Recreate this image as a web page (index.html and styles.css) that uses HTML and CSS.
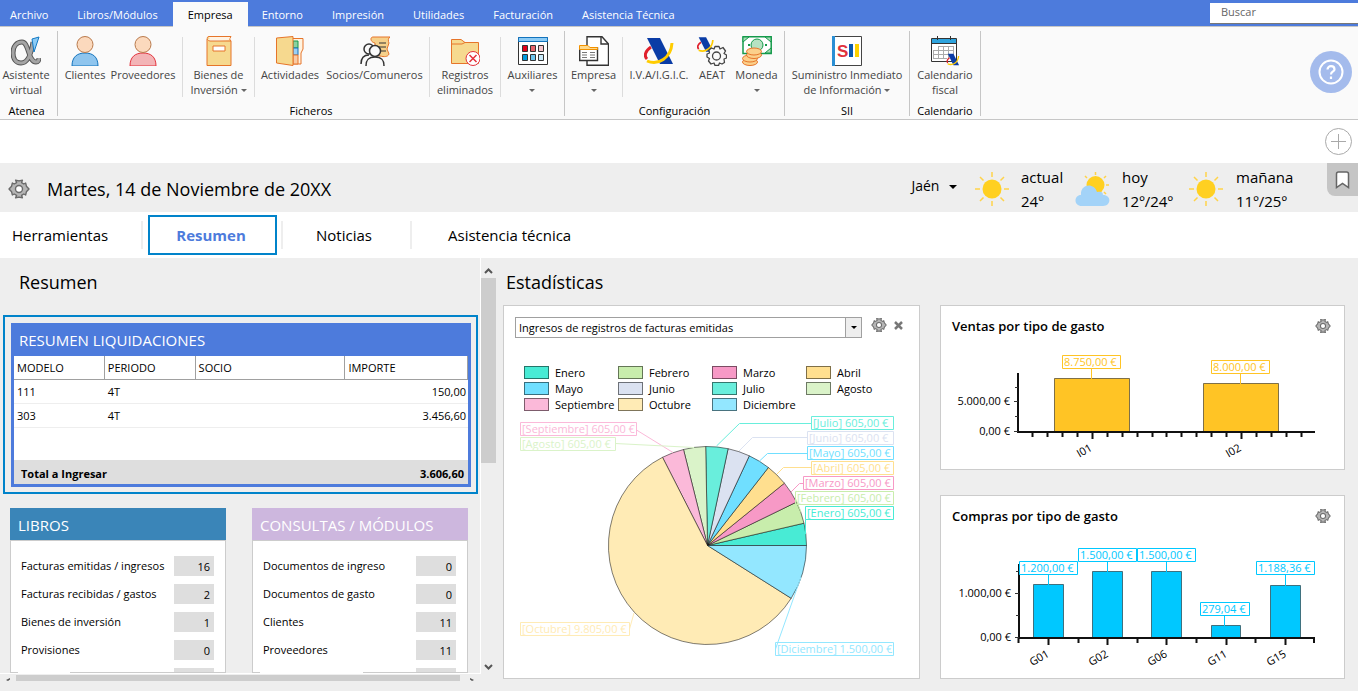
FILE: index.html
```html
<!DOCTYPE html>
<html lang="es">
<head>
<meta charset="utf-8">
<title>Resumen</title>
<link rel="stylesheet" href="styles.css">
</head>
<body>
<svg class="defs" aria-hidden="true">
  <symbol id="gear" viewBox="0 0 22 22">
    <path d="M8.6 4.6 7.6 2.2 11 2.9 14.4 2.2 13.6 4.6 15.8 6 17.6 5 18.4 8.2 21 11 18.4 13.8 17.6 17 15.8 16 13.6 17.4 14.4 19.8 11 19.1 7.600 19.8 8.600 17.4 6.200 16 4.400 17 3.600 13.800 1 11 3.600 8.200 4.400 5 6.200 6Z" fill="#b5b5b5" stroke="#6a6a6a" stroke-width="1.400" stroke-linejoin="round"/>
    <circle cx="11" cy="11" r="3.500" fill="#fff" stroke="#6a6a6a" stroke-width="1.400"/>
  </symbol>
  <symbol id="sun" viewBox="0 0 34 34">
    <circle cx="17" cy="17" r="9.500" fill="#ffd021"/>
    <path d="M17 0V5M17 29V34M0 17H5M29 17H34M5 5 8.500 8.500M25.500 25.500 29 29M29 5 25.500 8.500M8.500 25.500 5 29" stroke="#ffd34a" stroke-width="1.500"/>
  </symbol>
  <symbol id="aeat" viewBox="0 0 30 30">
    <path d="M3 2H16L29 28H16Z" fill="#0a3ca6"/>
    <path d="M7 11C1 15 0 20 3 23" fill="none" stroke="#e0202c" stroke-width="3"/>
    <path d="M3 25C14 30 27 22 28 7" fill="none" stroke="#fc0" stroke-width="3"/>
  </symbol>
</svg>

<header class="topbar">
  <nav class="menu">
    <button class="menu-file">Archivo</button>
    <button>Libros/Módulos</button>
    <button class="menu-active">Empresa</button>
    <button>Entorno</button>
    <button>Impresión</button>
    <button>Utilidades</button>
    <button>Facturación</button>
    <button>Asistencia Técnica</button>
  </nav>
  <input class="search" type="search" placeholder="Buscar" aria-label="Buscar">
</header>

<section class="ribbon">
  <div class="group g-atenea">
    <div class="tools">
      <button class="tool">
        <svg width="30" height="30" viewBox="0 0 30 30"><path d="M22 6C20 20 16 27 10 27C5 27 2 23 2 17C2 10 6 6 11 6C18 6 17 26 25 26C27 26 28 24 28 22" fill="none" stroke="#555" stroke-width="5"/><path d="M22 6C20 20 16 27 10 27C5 27 2 23 2 17C2 10 6 6 11 6C18 6 17 26 25 26C27 26 28 24 28 22" fill="none" stroke="#a5a5a5" stroke-width="3"/><path d="M21 3 28 1 23 16Z" fill="#8ccbf5" stroke="#1379c4"/></svg>
        <span>Asistente<br>virtual</span></button>
    </div>
    <h2>Atenea</h2>
  </div>
  <div class="group g-ficheros">
    <div class="tools">
      <button class="tool">
        <svg width="30" height="30" viewBox="0 0 30 30"><path d="M2 30C2 21 7 17 15 17S28 21 28 30Z" fill="#8fc5ee" stroke="#1273bd"/><circle cx="15" cy="8.500" r="8" fill="#fbd9bd" stroke="#b97a4c"/></svg>
        <span>Clientes</span></button>
      <button class="tool ruled">
        <svg width="30" height="30" viewBox="0 0 30 30"><path d="M2 30C2 21 7 17 15 17S28 21 28 30Z" fill="#f3b4b6" stroke="#e3323c"/><circle cx="15" cy="8.500" r="8" fill="#fbd9bd" stroke="#b97a4c"/></svg>
        <span>Proveedores</span></button>
      <button class="tool ruled">
        <svg width="30" height="30" viewBox="0 0 30 30"><path d="M3 3V29.500H27V5H6C3 5 2 .5 5 .5H27L25.500 3 27 5" fill="#f6d98f" stroke="#e6752a"/><path d="M5 1H26L25 4H6Z" fill="#fff3e3"/><path d="M9 10H21V15H9Z" fill="#fff" stroke="#e6752a"/></svg>
        <span>Bienes de<br>Inversión <i class="caret"></i></span></button>
      <button class="tool">
        <svg width="30" height="30" viewBox="0 0 30 30"><path d="M12 2.500H28V13L26 17V28H12Z" fill="#fff3e0" stroke="#e6752a"/><path d="M18 5H23V12H18Z" fill="#8ad1a0" stroke="#159a4b"/><path d="M18 12H23V19H18Z" fill="#9ad0f5" stroke="#1273bd"/><path d="M18 19H23V28H18Z" fill="#f9cba4" stroke="#e6752a"/><path d="M1.500 2 18 .5V29.500L1.500 27Z" fill="#f6d98f" stroke="#e6752a"/></svg>
        <span>Actividades</span></button>
      <button class="tool ruled wide">
        <svg width="30" height="30" viewBox="0 0 30 30"><path d="M13 1H30C28 2 28 5 29 7L27 13 29 18C28 21 24 21 20 20L15 19V7C10 6 10 1 13 1Z" fill="#f6d08a" stroke="#e6752a"/><path d="M19 7H26M18 11H26M20 15H26" stroke="#333"/><circle cx="9" cy="13" r="5" fill="#fafafa" stroke="#333" stroke-width="1.500"/><path d="M1 28C1 22 4 19 9 19" fill="none" stroke="#333" stroke-width="1.500"/><path d="M6 30C6 23 9 21 15 21S24 23 24 30" fill="#fafafa" stroke="#333" stroke-width="1.500"/><circle cx="15" cy="15" r="5.500" fill="#fafafa" stroke="#333" stroke-width="1.500"/></svg>
        <span>Socios/Comuneros</span></button>
      <button class="tool ruled">
        <svg width="30" height="30" viewBox="0 0 30 30"><path d="M1.500 27.500V3.500H11L15 6.500H28.500V27.500Z" fill="#f6d98f" stroke="#e6752a"/><path d="M2 8H12L15 6.500" fill="none" stroke="#e6752a"/><circle cx="23" cy="22.500" r="7" fill="#fff" stroke="#e3323c"/><path d="M19.500 19 26.500 26M26.500 19 19.500 26" stroke="#e3323c" stroke-width="1.500"/></svg>
        <span>Registros<br>eliminados</span></button>
      <button class="tool">
        <svg width="30" height="30" viewBox="0 0 30 30"><path d="M.5 1.500H29.500V28.500H.5Z" fill="#fff" stroke="#333"/><path d="M.5 1.500H29.500V5.500H.5Z" fill="#8ccbf5" stroke="#1273bd"/><g stroke="#333"><path d="M4.500 9.500H9.500V15.500H4.500Z" fill="#e2001a"/><path d="M12.500 9.500H17.500V15.500H12.500Z" fill="#e8636b"/><path d="M20.500 9.500H25.500V15.500H20.500Z" fill="#f7c4cb"/><path d="M4.500 18.500H9.500V24.500H4.500Z" fill="#0099dd"/><path d="M12.500 18.500H17.500V24.500H12.500Z" fill="#6cc5ee"/><path d="M20.500 18.500H25.500V24.500H20.500Z" fill="#c9eafa"/></g></svg>
        <span>Auxiliares<br><i class="caret"></i></span></button>
    </div>
    <h2>Ficheros</h2>
  </div>
  <div class="group g-config">
    <div class="tools">
      <button class="tool ruled">
        <svg width="30" height="30" viewBox="0 0 30 30"><path d="M8 .7H23L29.500 8V29.300H8Z" fill="#fff" stroke="#333" stroke-width="1.400"/><path d="M22 1V8H29" fill="none" stroke="#333" stroke-width="1.400"/><path d="M.7 12V24.500H18.500V12Z" fill="#fff" stroke="#333" stroke-width="1.400"/><path d="M.5 13.500V9.500H9L11 11.500H18.500V13.500Z" fill="#ffd98a" stroke="#f39200"/><path d="M3 16.500H8M3 19H8M3 21.500H8M11 16.500H16M11 19H16M11 21.500H16" stroke="#777"/></svg>
        <span>Empresa<br><i class="caret"></i></span></button>
      <button class="tool"><svg width="30" height="30"><use href="#aeat"/></svg><span>I.V.A/I.G.I.C.</span></button>
      <button class="tool">
        <svg width="30" height="30" viewBox="0 0 30 30"><use href="#aeat" width="17" height="17"/><path d="M17 13 18 10.500H22L23 13 26 11.500 28.500 15 27 17.500 29.500 19V22L27 23 27.500 26.500 25 28 22.500 27 21.500 29.500H18L17 27 14 28 11.500 25 12.500 22.500 10 21V18L12.500 17 12 14 14.500 12Z" fill="#fafafa" stroke="#444" stroke-width="1.300" stroke-linejoin="round"/><circle cx="19.500" cy="20" r="4" fill="#fafafa" stroke="#444" stroke-width="1.300"/></svg>
        <span>AEAT</span></button>
      <button class="tool">
        <svg width="30" height="30" viewBox="0 0 30 30"><path d="M1 .8H29.200V17.500H1Z" fill="#fff" stroke="#159a4b" stroke-width="1.500"/><path d="M1 1H7L1 6ZM29 1H23L29 6ZM29 17H23L29 12Z" fill="#a9dcb8" stroke="#159a4b"/><circle cx="15" cy="9" r="6" fill="#b6e2c2" stroke="#159a4b"/><path d="M6 9h2M23 9h2" stroke="#159a4b" stroke-width="2"/><g fill="#fbd08b" stroke="#e6752a"><ellipse cx="8" cy="26" rx="7.500" ry="3.500"/><ellipse cx="8" cy="22.500" rx="7.500" ry="3.500"/><ellipse cx="12" cy="19" rx="7.500" ry="3.500"/><ellipse cx="12" cy="15.500" rx="7.500" ry="3.500"/></g></svg>
        <span>Moneda<br><i class="caret"></i></span></button>
    </div>
    <h2>Configuración</h2>
  </div>
  <div class="group g-sii">
    <div class="tools">
      <button class="tool">
        <svg width="30" height="30" viewBox="0 0 30 30"><path d="M.5 .5H29.500V29.500H.5Z" fill="#fff" stroke="#444"/><path d="M0 0H3V30H0Z" fill="#2a8fd4"/><text x="5" y="21" class="sii-letter">S</text><path d="M17 8H21V21H17Z" fill="#0a5ab0"/><path d="M23 8H27V21H23Z" fill="#fed100"/></svg>
        <span>Suministro Inmediato<br>de Información <i class="caret"></i></span></button>
    </div>
    <h2>SII</h2>
  </div>
  <div class="group g-calendario">
    <div class="tools">
      <button class="tool">
        <svg width="30" height="30" viewBox="0 0 30 30"><path d="M1.500 2.500H26.500V25.500H1.500Z" fill="#fff" stroke="#333"/><path d="M2 3H26V7H2Z" fill="#2ea3dd"/><path d="M1.500 7.500H26.500M7.500 0V4M20.500 0V4" stroke="#333"/><path d="M8.500 10.500H23.500M3.500 14.500H23.500M3.500 18.500H23.500M3.500 22.500H17M3.500 14V23M8.500 10V23M13.500 10V23M18.500 10V23M23.500 10V20" stroke="#aaa" fill="none"/><use href="#aeat" x="16" y="17" width="14" height="13"/></svg>
        <span>Calendario<br>fiscal</span></button>
    </div>
    <h2>Calendario</h2>
  </div>
  <button class="help" aria-label="Ayuda"><svg width="26" height="26" viewBox="0 0 26 26" fill="none" stroke="#fff" stroke-width="2"><circle cx="13" cy="13" r="11.500"/><path d="M9.500 10.500C9.500 6 16.500 6 16.500 10.500C16.500 12.500 13 12.500 13 15.500M13 17.500V20" stroke-width="2.200"/></svg></button>
</section>

<div class="addbar"><button class="add" aria-label="Añadir"><svg width="27" height="27" viewBox="0 0 27 27" fill="none" stroke="#a9a9a9"><circle cx="13.500" cy="13.500" r="13"/><path d="M13.500 6V21M6 13.500H21"/></svg></button></div>

<section class="datebar">
  <svg width="22" height="22"><use href="#gear"/></svg>
  <h1>Martes, 14 de Noviembre de 20XX</h1>
  <button class="city">Jaén <i class="caret dark"></i></button>
  <svg width="34" height="34"><use href="#sun"/></svg>
  <p class="w-actual">actual<br>24º</p>
  <svg width="35" height="34" viewBox="0 0 35 34"><circle cx="20.500" cy="13" r="9" fill="#ffd021"/><path d="M20.500 0V3M10 4 12 6M31 4 29 6M31 13H34M29 20 31 22" stroke="#ffd34a" stroke-width="1.500"/><path d="M7 34C-2 34-1 23 6 23C5 12 19 10 22 20C27 19 28 21 28 23C37 23 36 34 28 34Z" fill="#a3d3f8"/></svg>
  <p class="w-hoy">hoy<br>12º/24º</p>
  <svg width="34" height="34"><use href="#sun"/></svg>
  <p class="w-manana">mañana<br>11º/25º</p>
  <button class="bookmark" aria-label="Marcador"><svg width="15" height="18" viewBox="0 0 15 18"><path d="M1.500 16.500V3Q1.500 1 3.500 1H11.500Q13.500 1 13.500 3V16.500L7.500 12.500Z" fill="#fff" stroke="#666" stroke-width="1.500"/></svg></button>
</section>

<nav class="tabs">
  <button class="t-herramientas">Herramientas</button>
  <button class="t-active">Resumen</button>
  <button class="t-noticias">Noticias</button>
  <button class="t-asistencia">Asistencia técnica</button>
</nav>

<main class="content">
  <section class="summary">
    <div class="pane">
      <h2 class="heading">Resumen</h2>
      <div class="highlight">
        <div class="settlement">
          <h3>RESUMEN LIQUIDACIONES</h3>
          <table>
            <thead><tr><th class="c-modelo">MODELO</th><th class="c-periodo">PERIODO</th><th class="c-socio">SOCIO</th><th>IMPORTE</th></tr></thead>
            <tbody>
              <tr><td>111</td><td>4T</td><td></td><td class="num">150,00</td></tr>
              <tr><td>303</td><td>4T</td><td></td><td class="num">3.456,60</td></tr>
            </tbody>
          </table>
          <div class="total"><span>Total a Ingresar</span><span>3.606,60</span></div>
        </div>
      </div>
      <div class="boxes">
        <article class="box libros">
          <h3>LIBROS</h3>
          <dl>
            <div><dt>Facturas emitidas / ingresos</dt><dd>16</dd></div>
            <div><dt>Facturas recibidas / gastos</dt><dd>2</dd></div>
            <div><dt>Bienes de inversión</dt><dd>1</dd></div>
            <div><dt>Provisiones</dt><dd>0</dd></div>
            <div><dt></dt><dd></dd></div>
          </dl>
        </article>
        <article class="box consultas">
          <h3>CONSULTAS / MÓDULOS</h3>
          <dl>
            <div><dt>Documentos de ingreso</dt><dd>0</dd></div>
            <div><dt>Documentos de gasto</dt><dd>0</dd></div>
            <div><dt>Clientes</dt><dd>11</dd></div>
            <div><dt>Proveedores</dt><dd>11</dd></div>
            <div><dt></dt><dd></dd></div>
          </dl>
        </article>
      </div>
    </div>
    <div class="vbar">
      <svg width="9" height="6" viewBox="0 0 9 6"><path d="M1 5 4.500 1.500 8 5" fill="none" stroke="#555" stroke-width="2"/></svg>
      <div class="vthumb"></div>
      <svg width="9" height="6" viewBox="0 0 9 6"><path d="M1 1 4.500 4.500 8 1" fill="none" stroke="#555" stroke-width="2"/></svg>
    </div>
    <div class="hbar">
      <svg width="4" height="3" viewBox="0 0 4 3"><path d="M0 2 4 0V1.500L2 3Z" fill="#555"/></svg>
      <div class="hthumb"></div>
      <svg width="4" height="3" viewBox="0 0 4 3"><path d="M4 2 0 0V1.500L2 3Z" fill="#555"/></svg>
    </div>
  </section>

  <section class="stats">
    <h2 class="heading">Estadísticas</h2>
    <div class="cards">
      <article class="card pie-card">
        <div class="pie-head">
          <div class="picker">
            <select aria-label="Estadística"><option>Ingresos de registros de facturas emitidas</option></select>
            <span class="picker-arrow"><i class="caret dark"></i></span>
          </div>
          <button aria-label="Configurar"><svg width="16" height="16"><use href="#gear"/></svg></button>
          <button class="close" aria-label="Cerrar"><svg width="9" height="9" viewBox="0 0 9 9"><path d="M1 1 8 8M8 1 1 8" stroke="#777" stroke-width="2.500"/></svg></button>
        </div>
        <ul class="legend">
          <li class="m1">Enero</li><li class="m2">Febrero</li><li class="m3">Marzo</li><li class="m4">Abril</li>
          <li class="m5">Mayo</li><li class="m6">Junio</li><li class="m7">Julio</li><li class="m8">Agosto</li>
          <li class="m9">Septiembre</li><li class="m10">Octubre</li><li class="m12">Diciembre</li>
        </ul>
        <svg class="chart" viewBox="504 412 415 266">
          <g class="slices">
            <path class="m1" d="M707.500 545.500 806.500 545.500A99 99 0 0 0 804 523.200Z"/>
            <path class="m2" d="M707.500 545.500 804 523.200A99 99 0 0 0 796.500 502.100Z"/>
            <path class="m3" d="M707.500 545.500 796.500 502.100A99 99 0 0 0 784.400 483.200Z"/>
            <path class="m4" d="M707.500 545.500 784.400 483.200A99 99 0 0 0 768.400 467.500Z"/>
            <path class="m5" d="M707.500 545.500 768.400 467.500A99 99 0 0 0 749.300 455.800Z"/>
            <path class="m6" d="M707.500 545.500 749.300 455.800A99 99 0 0 0 728.100 448.700Z"/>
            <path class="m7" d="M707.500 545.500 728.100 448.700A99 99 0 0 0 705.700 446.500Z"/>
            <path class="m8" d="M707.500 545.500 705.700 446.500A99 99 0 0 0 683.500 449.500Z"/>
            <path class="m9" d="M707.500 545.500 683.500 449.500A99 99 0 0 0 662.500 457.300Z"/>
            <path class="m10" d="M707.500 545.500 662.500 457.300A99 99 0 1 0 791.200 598.300Z"/>
            <path class="m12" d="M707.500 545.500 791.200 598.300A99 99 0 0 0 806.500 545.500Z"/>
          </g>
          <g class="tag m7"><path d="M716.500 446 739.500 423.500H811.500M811.500 416.500H893.500V429.500H811.500Z"/><text x="813" y="427">[Julio] 605,00 €</text></g>
          <g class="tag m6"><path d="M739 451 752.500 437.500H807.500M807.500 431.500H893.500V444.500H807.500Z"/><text x="809" y="442">[Junio] 605,00 €</text></g>
          <g class="tag m5"><path d="M759.500 461 767.500 453.500H807.500M807.500 446.500H893.500V459.500H807.500Z"/><text x="809" y="457">[Mayo] 605,00 €</text></g>
          <g class="tag m4"><path d="M777 474 783.500 467.500H811.500M811.500 461.500H893.500V474.500H811.500Z"/><text x="813" y="472">[Abril] 605,00 €</text></g>
          <g class="tag m3"><path d="M791 492 799.500 483.500H803.500M803.500 476.500H893.500V489.500H803.500Z"/><text x="805" y="487">[Marzo] 605,00 €</text></g>
          <g class="tag m2"><path d="M801 512 795.500 498.500M795.500 491.500H893.500V504.500H795.500Z"/><text x="797" y="502">[Febrero] 605,00 €</text></g>
          <g class="tag m1"><path d="M805.500 534V519.500M805.500 506.500H893.500V519.500H805.500Z"/><text x="807" y="517">[Enero] 605,00 €</text></g>
          <g class="tag m9"><path d="M673 452.500 636.500 430M520.500 422.500H636.500V435.500H520.500Z"/><text x="522" y="433">[Septiembre] 605,00 €</text></g>
          <g class="tag m8"><path d="M694 447.500 615.500 443.500M520.500 437.500H615.500V450.500H520.500Z"/><text x="522" y="448">[Agosto] 605,00 €</text></g>
          <g class="tag m10"><path d="M634 613 629.500 629M520.500 622.500H629.500V635.500H520.500Z"/><text x="522" y="633">[Octubre] 9.805,00 €</text></g>
          <g class="tag m12"><path d="M801 577 775.500 649M775.500 642.500H893.500V655.500H775.500Z"/><text x="777" y="653">[Diciembre] 1.500,00 €</text></g>
        </svg>
      </article>

      <div class="bar-cards">
        <article class="card">
          <div class="card-head"><h3>Ventas por tipo de gasto</h3><button aria-label="Configurar"><svg width="16" height="16"><use href="#gear"/></svg></button></div>
          <svg class="chart" viewBox="941 346 403 123">
            <g class="bars ventas"><path d="M1054.500 432V378.500H1129.500V432ZM1203.500 432V383.500H1278.500V432Z"/></g>
            <g class="tag ventas"><path d="M1091.500 368.500V379M1240.500 373.500V384M1062.500 355.500H1120.500V368.500H1062.500ZM1211.500 360.500H1269.500V373.500H1211.500Z"/><text x="1064" y="366">8.750,00 €</text><text x="1213" y="371">8.000,00 €</text></g>
            <path class="axis" d="M1018 373V432H1315"/>
            <path class="ticks" d="M1015 387.500H1018M1014 401.500H1018M1015 416.500H1018M1014 431.500H1018"/>
            <path class="axis" d="M1032.500 432V437M1047.500 432V437M1062.500 432V437M1077.500 432V437M1092.500 432V439M1107.500 432V437M1122.500 432V437M1137.500 432V437M1152.500 432V437M1166.500 432V437M1181.500 432V437M1196.500 432V437M1211.500 432V437M1226.500 432V437M1241.500 432V439M1256.500 432V437M1271.500 432V437M1286.500 432V437M1301.500 432V437"/>
            <text class="end" x="1010" y="405">5.000,00 €</text><text class="end" x="1010" y="435">0,00 €</text>
            <text class="end" transform="translate(1093 450) rotate(-30)">I01</text><text class="end" transform="translate(1242 450) rotate(-30)">I02</text>
          </svg>
        </article>
        <article class="card">
          <div class="card-head"><h3>Compras por tipo de gasto</h3><button aria-label="Configurar"><svg width="16" height="16"><use href="#gear"/></svg></button></div>
          <svg class="chart" viewBox="941 536 403 142">
            <path class="axis" d="M1019 564V638"/>
            <g class="bars compras"><path d="M1033.500 638V584.500H1063.500V638ZM1092.500 638V571.500H1122.500V638ZM1151.500 638V571.500H1181.500V638ZM1211.500 638V625.500H1240.500V638ZM1270.500 638V585.500H1300.500V638Z"/></g>
            <g class="tag compras"><path class="plate" d="M1019.500 561.500H1077.500V574.500H1019.500ZM1078.500 548.500H1136.500V561.500H1078.500ZM1137.500 548.500H1195.500V561.500H1137.500ZM1200.500 602.500H1249.500V615.500H1200.500ZM1256.500 561.500H1314.500V574.500H1256.500Z"/><path d="M1048.500 574.500V585M1107.500 561.500V572M1166.500 561.500V572M1224.500 615.500V626M1285.500 574.500V586"/><text x="1021" y="572">1.200,00 €</text><text x="1080" y="559">1.500,00 €</text><text x="1139" y="559">1.500,00 €</text><text x="1202" y="613">279,04 €</text><text x="1258" y="572">1.188,36 €</text></g>
            <path class="axis" d="M1018 638H1315M1018.500 638V643M1048.500 638V645M1078.500 638V643M1107.500 638V645M1137.500 638V643M1166.500 638V645M1196.500 638V643M1226.500 638V645M1255.500 638V643M1285.500 638V645M1314 638V643"/>
            <path class="ticks" d="M1016 571.500H1019M1015 593.500H1019M1016 615.500H1019M1015 637.500H1019"/>
            <text class="end" x="1011" y="597">1.000,00 €</text><text class="end" x="1011" y="641">0,00 €</text>
            <g class="end"><text transform="translate(1050 656) rotate(-30)">G01</text><text transform="translate(1109 656) rotate(-30)">G02</text><text transform="translate(1168 656) rotate(-30)">G06</text><text transform="translate(1228 656) rotate(-30)">G11</text><text transform="translate(1287 656) rotate(-30)">G15</text></g>
          </svg>
        </article>
      </div>
    </div>
  </section>
</main>
</body>
</html>
```
FILE: styles.css
```css
* { box-sizing: border-box; }

body {
  margin: 0;
  height: 100vh;
  display: flex;
  flex-direction: column;
  overflow: hidden;
  background: #fff;
  color: #000;
  font: 11px/15px "Open Sans", "Noto Sans", sans-serif;
}

h1, h2, h3, p, dl, dd, ul { margin: 0; padding: 0; font-weight: 400; }
button { margin: 0; padding: 0; border: 0; background: none; color: inherit; font: inherit; }
svg { display: block; flex: none; }
.defs { position: absolute; width: 0; height: 0; }

.caret {
  display: inline-block;
  border: 3px solid transparent;
  border-top-color: #666;
  border-bottom: 0;
  vertical-align: 2px;
}
.caret.dark { border-width: 4px 4px 0; border-top-color: #000; }

/* Top menu */
.topbar {
  display: flex;
  justify-content: space-between;
  align-items: flex-start;
  height: 27px;
  background: #4d7bdc;
  border-bottom: 1px solid #c6c6c6;
}
.menu { display: flex; padding-top: 2px; color: #fff; }
.menu button { height: 25px; padding: 0 15px 0 14px; white-space: nowrap; }
.menu .menu-file { padding: 0 15px 0 10px; }
.menu .menu-active { padding: 0 15px; background: #fafafa; color: #000; }
.search {
  width: 148px;
  height: 21px;
  margin-top: 3px;
  padding: 0 11px 3px;
  border: 0;
  border-bottom: 1px solid #777;
  border-radius: 0;
  background: #fff;
  font: inherit;
  appearance: none;
}
.search::placeholder { color: #666; }

/* Ribbon */
.ribbon {
  display: flex;
  height: 93px;
  padding-top: 4px;
  background: #fafafa;
  border-bottom: 1px solid #c6c6c6;
}
.group { height: 85px; border-right: 1px solid #c6c6c6; }
.group h2 { font-size: 11px; line-height: 15px; text-align: center; margin-top: 6px; }
.tools { display: grid; height: 66px; padding-top: 6px; }
.g-atenea .tools { grid-template-columns: 52px 5px; }
.g-atenea h2 { padding-right: 4px; }
.g-ficheros .tools { grid-template-columns: 54px 71px 72px 70px 105px 71px 63px; }
.g-config .tools { grid-template-columns: 58px 72px 34px 55px; }
.g-sii .tools { grid-template-columns: 124px; }
.g-calendario .tools { grid-template-columns: 70px; }
.tool {
  display: flex;
  flex-direction: column;
  align-items: center;
  height: 60px;
  color: #444;
  white-space: nowrap;
  line-height: 15px;
  gap: 1px;
}
.tool svg { margin-top: -1px; }
.tool.ruled { border-right: 1px solid #dcdcdc; }
.g-ficheros .tool.ruled:nth-child(2) { padding-right: 8px; }
.tool.wide { padding-right: 5px; }
.sii-letter { font: 700 17px "Liberation Sans", sans-serif; fill: #e0323c; }
.help {
  display: grid;
  place-items: center;
  width: 42px;
  height: 42px;
  margin: 20px 6px 0 auto;
  border-radius: 50%;
  background: #a4bbec;
}

.addbar { display: flex; justify-content: flex-end; align-items: flex-start; height: 43px; padding: 8px 6px 0; }

/* Date and weather */
.datebar {
  display: flex;
  align-items: center;
  height: 49px;
  padding-left: 8px;
  background: #eee;
  font-size: 15px;
}
.datebar > svg { margin-top: 2px; }
.datebar h1 { margin: 3px auto 0 17px; font-size: 18px; line-height: 24px; }
.city { margin: -4px 18px 0 0; font-size: 14px; }
.city .caret { margin-left: 6px; }
.datebar p { line-height: 24px; margin: 2px 0 0 12px; white-space: nowrap; }
.datebar .w-actual { width: 42px; margin-right: 12px; }
.datebar .w-hoy { width: 56px; margin-right: 11px; }
.datebar .w-manana { width: 57px; margin: 2px 34px 0 13px; }
.bookmark {
  display: grid;
  place-items: center;
  align-self: flex-start;
  width: 31px;
  height: 33px;
  border-radius: 0 0 0 8px;
  background: #c5c5c5;
}

/* Section tabs */
.tabs { display: flex; height: 46px; padding: 3px 0 3px 12px; font-size: 15px; }
.tabs button { display: flex; align-items: center; height: 40px; white-space: nowrap; }
.tabs .t-herramientas { width: 131px; height: 28px; margin: 6px 5px 6px 0; border-right: 2px solid #eee; }
.tabs .t-active {
  justify-content: center;
  width: 129px;
  padding-right: 3px;
  border: 2px solid #0083ca;
  color: #4d7bdc;
  font-weight: 700;
}
.tabs .t-noticias {
  justify-content: center;
  width: 131px;
  height: 28px;
  margin: 6px 0 0 4px;
  padding-right: 5px;
  border: solid #eee;
  border-width: 0 2px;
}
.tabs .t-asistencia { margin-left: 36px; }

/* Content */
.content {
  flex: 1;
  min-height: 0;
  display: grid;
  grid-template-columns: 497fr 861fr;
  grid-template-rows: minmax(0, 1fr);
  background: #eee;
}
.heading { font-size: 18px; line-height: 24px; }

.summary {
  display: grid;
  grid-template: minmax(0, 1fr) 7px / minmax(0, 1fr) 16px;
  min-height: 0;
  padding-bottom: 10px;
}
.pane {
  display: flex;
  flex-direction: column;
  min-height: 0;
  overflow: hidden;
  padding: 12px 2px 0 3px;
  border-right: 1px solid #fff;
  border-bottom: 1px solid #fff;
}
.pane .heading { margin: 0 16px 21px; }
.highlight { border: 2px solid #0083ca; padding: 6px 5px 5px 6px; margin-bottom: 14px; }
.settlement { background: #4d7bdc; padding: 0 3px 3px; }
.settlement h3 { height: 33px; padding-left: 5px; color: #fff; font-size: 15px; line-height: 35px; }
table { width: 100%; border-collapse: separate; border-spacing: 0; table-layout: fixed; background: #fff; }
th, td { height: 24px; padding: 0 3px; font-weight: 400; text-align: left; }
th { border-right: 1px solid #a0a0a0; border-bottom: 1px solid #a0a0a0; }
td { border-bottom: 1px solid #eee; }
.c-modelo, .c-periodo { width: 20%; }
.c-socio { width: 33%; }
td.num { padding-right: 2px; text-align: right; }
.total {
  display: flex;
  justify-content: space-between;
  border-top: 32px solid #fff;
  padding: 2px 4px 0 7px;
  height: 56px;
  background: #dedede;
  line-height: 24px;
  font-weight: 700;
}

.boxes {
  flex: 1;
  min-height: 0;
  display: grid;
  grid-template-columns: 1fr 1fr;
  grid-template-rows: minmax(0, 1fr);
  gap: 26px;
  padding: 0 10px 0 7px;
}
.box { position: relative; display: flex; flex-direction: column; min-height: 0; }
.box h3 { flex: none; height: 32px; padding-left: 8px; color: #fff; font-size: 15px; line-height: 34px; }
.box dl {
  flex: 1;
  min-height: 0;
  overflow: hidden;
  padding: 15px 11px 0 10px;
  border: 1px solid #ccc;
  background: #fff;
}
.box dl div { display: flex; justify-content: space-between; align-items: center; height: 28px; padding-bottom: 8px; }
.box dt { line-height: 22px; white-space: nowrap; }
.box dd { width: 40px; height: 20px; padding-right: 4px; background: #dedede; line-height: 22px; text-align: right; }
.box::after { content: ""; position: absolute; bottom: 0; left: 8px; width: 52px; height: 1px; background: #fff; }
.libros h3 { background: #3a85b8; }
.consultas h3 { background: #cdb7de; }
.consultas::after { width: 103px; }

.vbar {
  display: flex;
  flex-direction: column;
  align-items: center;
  margin-top: 4px;
  padding: 6px 1px 4px 0;
}
.vthumb { width: 15px; height: 46%; margin: 4px 0 auto; background: #cdcdcd; }
.hbar { display: flex; align-items: flex-end; padding: 0 7px 0 6px; gap: 6px; }
.hthumb { flex: 1; height: 6px; background: #cdcdcd; margin-right: 4px; }

.stats { padding: 12px 13px 12px 6px; }
.stats .heading { margin: 0 3px 11px; }
.cards { display: grid; grid-template-columns: 417fr 405fr; gap: 20px; align-items: start; }
.card { border: 1px solid #ccc; background: #fff; }
.bar-cards { display: grid; gap: 25px; }
.chart { width: 100%; height: auto; }
.card-head { display: flex; justify-content: space-between; align-items: center; height: 40px; padding: 0 13px 0 11px; }
.card-head h3 { font-size: 13px; font-weight: 600; line-height: 20px; }

.pie-head { display: flex; align-items: center; height: 42px; padding: 0 16px 0 11px; }
.pie-head button { margin-bottom: 4px; }
.picker { position: relative; flex: 1; margin-right: 9px; }
.picker select {
  display: block;
  width: 100%;
  height: 21px;
  padding: 0 20px 0 3px;
  border: 1px solid #a0a0a0;
  border-radius: 0;
  background: #fff;
  color: #000;
  font: inherit;
  appearance: none;
}
.picker-arrow {
  position: absolute;
  top: 1px;
  right: 1px;
  bottom: 1px;
  display: grid;
  place-items: center;
  width: 16px;
  border-left: 1px solid #a0a0a0;
  background: #eee;
  pointer-events: none;
}
.picker-arrow .caret { border-width: 3px 3px 0; }
.pie-head .close { margin-left: 7px; }

.legend {
  display: grid;
  grid-template-columns: repeat(4, 94px);
  grid-auto-rows: 16px;
  padding: 16px 0 0 20px;
  list-style: none;
}
.legend li { display: flex; align-items: center; gap: 6px; }
.legend li::before {
  content: "";
  width: 23px;
  height: 11px;
  border: 1px solid rgba(0, 0, 0, .5);
  background: var(--c);
}

.m1 { --c: #48ebd5; }
.m2 { --c: #c8edac; }
.m3 { --c: #f799c6; }
.m4 { --c: #ffdf8f; }
.m5 { --c: #70dfff; }
.m6 { --c: #dbe2f1; }
.m7 { --c: #69eedc; }
.m8 { --c: #daf3c9; }
.m9 { --c: #fbb9d9; }
.m10 { --c: #ffebb5; }
.m12 { --c: #93e7ff; }
.ventas { --c: #ffc425; }
.compras { --c: #00c8ff; }

.slices path { fill: var(--c); stroke: rgba(0, 0, 0, .5); stroke-linejoin: round; }
.bars { fill: var(--c); stroke: rgba(0, 0, 0, .5); }
.tag path { fill: none; stroke: var(--c); }
.tag .plate { fill: #fff; }
.tag text { fill: var(--c); }
.axis { fill: none; stroke: #111; stroke-width: 2; }
.ticks { fill: none; stroke: #333; }
.end { text-anchor: end; }
```
